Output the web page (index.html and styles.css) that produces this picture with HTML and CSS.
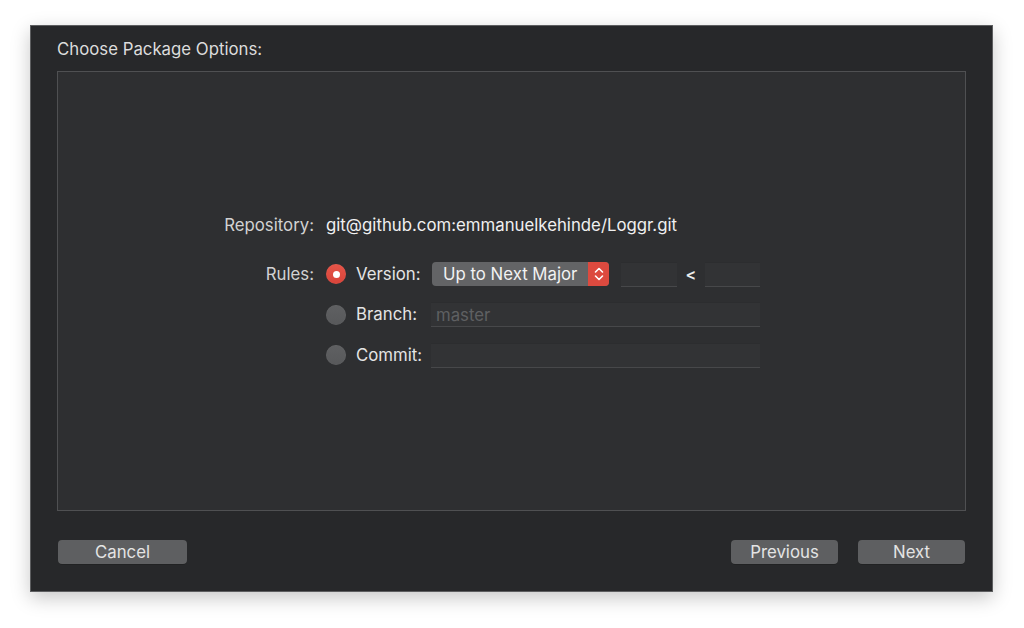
FILE: index.html
```html
<!DOCTYPE html>
<html>
<head>
<meta charset="utf-8">
<link rel="stylesheet" href="styles.css">
</head>
<body>
<div class="window">
  <div class="title">Choose Package Options:</div>
  <div class="panel">
    <div class="form">
      <div class="label">Repository:</div>
      <div class="value">git@github.com:emmanuelkehinde/Loggr.git</div>
      <div class="label rules-label">Rules:</div>
      <div class="rules">
        <div class="radio on"></div>
        <div class="opt">Version:</div>
        <div class="ctrls">
          <div class="popup"><span class="popup-text">Up to Next Major</span><span class="stepper"><svg width="12" height="16" viewBox="0 0 12 16"><path d="M2.5 6 L6 2.5 L9.5 6 M2.5 10 L6 13.5 L9.5 10" fill="none" stroke="#fff" stroke-width="1.6" stroke-linecap="round" stroke-linejoin="round"/></svg></span></div>
          <div class="field small"></div>
          <span class="lt">&lt;</span>
          <div class="field small2"></div>
        </div>
        <div class="radio"></div>
        <div class="opt">Branch:</div>
        <div class="field wide"><span class="ph">master</span></div>
        <div class="radio"></div>
        <div class="opt">Commit:</div>
        <div class="field wide"></div>
      </div>
    </div>
  </div>
  <div class="buttons">
    <div class="btn cancel">Cancel</div>
    <div class="spacer"></div>
    <div class="btn prev">Previous</div>
    <div class="btn next">Next</div>
  </div>
</div>
</body>
</html>
```
FILE: styles.css
```css
html, body {
  margin: 0;
  padding: 0;
  background: #ffffff;
  width: 1024px;
  height: 628px;
  overflow: hidden;
}
body {
  font-family: Inter, "Liberation Sans", sans-serif;
  font-size: 16.8px;
  padding-top: 25px;
  padding-left: 30px;
  box-sizing: border-box;
}
.window {
  width: 963px;
  height: 567px;
  box-sizing: border-box;
  background: #27282a;
  border: 1px solid #5d5e60;
  box-shadow: 0 6px 18px rgba(0, 0, 0, 0.22);
  display: flex;
  flex-direction: column;
  padding: 0 26px 27px 26px;
}
.title {
  color: #dcdcdc;
  height: 45px;
  line-height: 46px;
}
.panel {
  height: 440px;
  box-sizing: border-box;
  background: #2e2f31;
  border: 1px solid #4f5052;
  display: flex;
  align-items: center;
  padding-bottom: 2px;
}
.form {
  display: grid;
  grid-template-columns: 256px auto;
  column-gap: 12px;
  row-gap: 25px;
  align-items: start;
  color: #e6e6e6;
}
.label {
  text-align: right;
  color: #d2d2d2;
  line-height: 24px;
}
.value {
  color: #f0f0f0;
  line-height: 24px;
}
.rules-label {
  line-height: 25px;
}
.rules {
  display: grid;
  grid-template-columns: 20px 66px auto;
  column-gap: 10px;
  row-gap: 15.5px;
  align-items: center;
}
.radio {
  width: 20px;
  height: 20px;
  border-radius: 50%;
  background: linear-gradient(#5f6062, #58595b);
  box-shadow: inset 0 0 0 0.5px rgba(255,255,255,0.06);
  position: relative;
}
.radio.on {
  background: linear-gradient(#e65548, #d8443a);
}
.radio.on::after {
  content: "";
  position: absolute;
  left: 6.5px;
  top: 6.5px;
  width: 7px;
  height: 7px;
  border-radius: 50%;
  background: #ffffff;
}
.opt {
  color: #e4e4e4;
  line-height: 25px;
  white-space: nowrap;
}
.ctrls {
  display: flex;
  align-items: center;
}
.popup {
  width: 177px;
  height: 24px;
  border-radius: 4px;
  background: #636466;
  display: flex;
  align-items: center;
  overflow: hidden;
  box-sizing: border-box;
}
.popup-text {
  flex: 1;
  color: #f2f2f2;
  padding-left: 11px;
  line-height: 24px;
  white-space: nowrap;
}
.stepper {
  width: 21px;
  height: 24px;
  background: #dc4a3f;
  display: flex;
  align-items: center;
  justify-content: center;
}
.field {
  height: 25px;
  box-sizing: border-box;
  background: #323335;
  border-bottom: 1px solid #47484a;
  border-top: 1px solid #2c2d2f;
}
.field.small {
  width: 56px;
  margin-left: 12px;
}
.lt {
  color: #ececec;
  width: 28px;
  text-align: center;
  font-size: 16px;
  font-weight: 600;
}
.field.small2 {
  width: 55px;
}
.field.wide {
  width: 329px;
  margin-left: -1px;
  display: flex;
  align-items: center;
}
.ph {
  color: #5f6062;
  padding-left: 5px;
}
.buttons {
  display: flex;
  margin-top: 29px;
  padding-left: 1px;
  padding-right: 1px;
  gap: 20px;
}
.spacer {
  flex: 1;
}
.btn {
  height: 24px;
  line-height: 24px;
  border-radius: 4px;
  background: #5e5f61;
  color: #e4e4e4;
  text-align: center;
  box-shadow: 0 0.5px 0 rgba(0,0,0,0.3);
}
.btn.cancel { width: 129px; }
.btn.prev { width: 107px; }
.btn.next { width: 107px; }
```
